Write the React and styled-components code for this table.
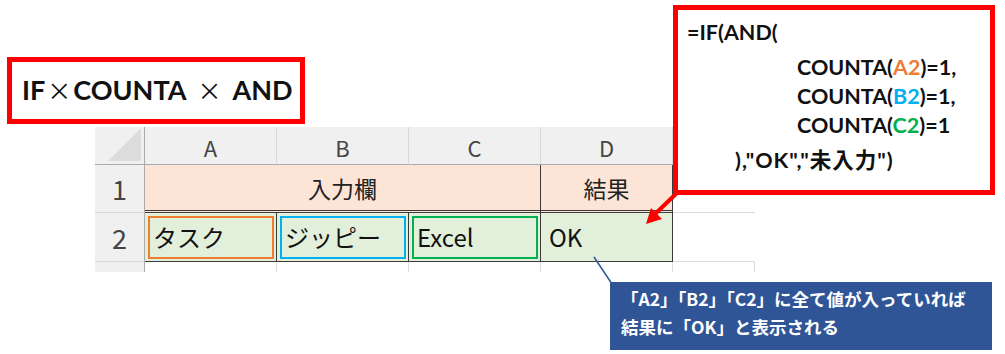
import React from 'react';
import styled, { createGlobalStyle } from 'styled-components';

const GlobalStyle = createGlobalStyle`
  body {
    margin: 0;
    background: #fff;
  }
`;

const cols = ['A', 'B', 'C', 'D'];
const inputs = [
  { text: 'タスク', color: '#ED7D31' },
  { text: 'ジッピー', color: '#00B0F0' },
  { text: 'Excel', color: '#00B050' },
];

const App = () => (
  <>
    <GlobalStyle />
    <Page>
      <Sheet>
        <Corner />
        {cols.map((c) => (
          <ColHead key={c}>{c}</ColHead>
        ))}
        <Blank $head />

        <RowHead>1</RowHead>
        <HeadCell $span={3}>入力欄</HeadCell>
        <HeadCell $last>結果</HeadCell>
        <Blank />

        <RowHead>2</RowHead>
        {inputs.map((i) => (
          <DataCell key={i.text}>
            <Frame $color={i.color}>{i.text}</Frame>
          </DataCell>
        ))}
        <DataCell $last>
          <Frame>OK</Frame>
        </DataCell>
        <Blank />

        <RowHead $stub />
        <Stub />
        <Stub />
        <Stub />
        <Stub />
        <Stub />
      </Sheet>

      <TitleBox>
        <b>IF</b>
        <Times>×</Times>
        <b>COUNTA</b>
        <Times $wide>×</Times>
        <b>AND</b>
      </TitleBox>

      <FormulaBox>
        <Line>=IF(AND(</Line>
        <Line $indent={110} $gap={6}>
          COUNTA(<Ref $color="#ED7D31">A2</Ref>)=1,
        </Line>
        <Line $indent={110}>
          COUNTA(<Ref $color="#00B0F0">B2</Ref>)=1,
        </Line>
        <Line $indent={110}>
          COUNTA(<Ref $color="#00B050">C2</Ref>)=1
        </Line>
        <Line $indent={48} $gap={6} $spaced>
          ),"OK","未入力")
        </Line>
      </FormulaBox>

      <Arrow viewBox="0 0 60 50" width="60" height="50">
        <line x1="48" y1="11" x2="24" y2="34" stroke="#FF0000" strokeWidth="4" />
        <polygon points="15,44 20,28 31,39" fill="#FF0000" />
      </Arrow>

      <Leader viewBox="0 0 26 34" width="26" height="34">
        <line x1="4" y1="4" x2="22" y2="31" stroke="#2F5597" strokeWidth="1.5" />
      </Leader>

      <Callout>
        <div>「A2」「B2」「C2」に全て値が入っていれば</div>
        <div>結果に「OK」と表示される</div>
      </Callout>
    </Page>
  </>
);

export default App;

const Page = styled.div`
  position: relative;
  width: 1005px;
  height: 354px;
  overflow: hidden;
  padding: 127px 0 0 95px;
  box-sizing: border-box;
  font-family: 'Noto Sans CJK JP', 'Noto Sans', sans-serif;
`;

const Sheet = styled.div`
  display: grid;
  grid-template-columns: 50px 132px 132px 132px 132px 82px;
  grid-template-rows: 38px 48px 49px 10px;
  width: 660px;
`;

const Corner = styled.div`
  background: #f0f0f0;
  border-right: 1px solid #ababab;
  border-bottom: 1px solid #ababab;
  position: relative;

  &::after {
    content: '';
    position: absolute;
    right: 3px;
    bottom: 3px;
    width: 33px;
    height: 33px;
    background: #dcdcdc;
    clip-path: polygon(100% 0, 100% 100%, 0 100%);
  }
`;

const ColHead = styled.div`
  background: #f0f0f0;
  border-right: 1px solid #d8d8d8;
  border-bottom: 1px solid #ababab;
  display: flex;
  align-items: center;
  justify-content: center;
  font-size: 22px;
  color: #444;
  padding-top: 2px;
`;

const RowHead = styled.div`
  background: #f0f0f0;
  border-right: 1px solid #ababab;
  border-bottom: ${(p) => (p.$stub ? 'none' : '1px solid #d8d8d8')};
  display: flex;
  align-items: center;
  justify-content: center;
  font-size: 27px;
  color: #444;
`;

const HeadCell = styled.div`
  grid-column: span ${(p) => p.$span || 1};
  background: #fce4d6;
  border-right: 1px solid #3a3a3a;
  border-bottom: 3px double #3a3a3a;
  display: flex;
  align-items: center;
  justify-content: center;
  font-size: 23px;
  color: #222;
`;

const DataCell = styled.div`
  background: #e2efda;
  border-right: 1px solid #3a3a3a;
  border-bottom: 1px solid #3a3a3a;
  padding: 3px 2px 2px 3px;
  display: flex;
`;

const Frame = styled.div`
  flex: 1;
  border: 2px solid ${(p) => p.$color || 'transparent'};
  display: flex;
  align-items: center;
  padding: 0 0 2px 3px;
  font-size: 24px;
  color: #111;
`;

const Blank = styled.div`
  background: ${(p) => (p.$head ? '#f0f0f0' : '#fff')};
  border-bottom: 1px solid ${(p) => (p.$head ? '#ababab' : '#dcdcdc')};
`;

const Stub = styled.div`
  border-right: 1px solid #dcdcdc;
`;

const TitleBox = styled.div`
  position: absolute;
  left: 7px;
  top: 57px;
  width: 298px;
  height: 67px;
  box-sizing: border-box;
  border: 5px solid #ff0000;
  background: #fff;
  display: flex;
  align-items: center;
  padding: 0 0 2px 10px;
  font-family: Lato, 'Noto Sans', sans-serif;
  font-size: 27px;
  color: #111;

  b {
    font-weight: 700;
  }
`;

const Times = styled.span`
  font-family: 'Noto Sans CJK JP', sans-serif;
  font-weight: 400;
  font-size: 24px;
  margin: 0 ${(p) => (p.$wide ? '11px' : '2px')};
`;

const FormulaBox = styled.div`
  position: absolute;
  left: 673px;
  top: 5px;
  width: 322px;
  height: 190px;
  box-sizing: border-box;
  border: 5px solid #ff0000;
  background: #fff;
  padding: 8px 0 0 9px;
  font-family: Lato, 'Noto Sans CJK JP', sans-serif;
  font-weight: 700;
  font-size: 21.5px;
  color: #111;
`;

const Line = styled.div`
  height: 29px;
  line-height: 29px;
  padding-left: ${(p) => p.$indent || 0}px;
  margin-top: ${(p) => p.$gap || 0}px;
  letter-spacing: ${(p) => (p.$spaced ? '1px' : '0')};
  white-space: pre;
`;

const Ref = styled.span`
  color: ${(p) => p.$color};
`;

const Arrow = styled.svg`
  position: absolute;
  left: 631px;
  top: 180px;
`;

const Leader = styled.svg`
  position: absolute;
  left: 590px;
  top: 253px;
`;

const Callout = styled.div`
  position: absolute;
  left: 610px;
  top: 282px;
  width: 382px;
  height: 68px;
  box-sizing: border-box;
  background: #2f5597;
  color: #fff;
  padding: 3px 0 0 11px;
  font-family: 'Noto Sans CJK JP', sans-serif;
  font-weight: 700;
  font-size: 17.5px;
  line-height: 28px;
`;
